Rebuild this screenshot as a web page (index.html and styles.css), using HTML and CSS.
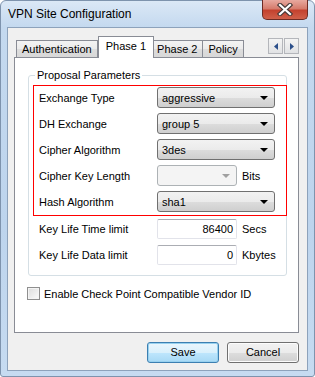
FILE: index.html
```html
<!DOCTYPE html>
<html>
<head>
    <title>VPN Site Configuration</title>
    <link rel="stylesheet" href="styles.css">
</head>
<body>
    <div class="window">
        <div class="titlebar">
            <span class="title">VPN Site Configuration</span>
            <div class="close">
                <svg width="16" height="13" viewBox="0 0 16 13">
                    <path d="M3 2 L13 11 M13 2 L3 11" stroke="#4a3a38" stroke-width="4.4" stroke-linecap="square"/>
                    <path d="M3 2 L13 11 M13 2 L3 11" stroke="#ffffff" stroke-width="2.2" stroke-linecap="square"/>
                </svg>
            </div>
        </div>
        <div class="client">
            <div class="tabstrip">
                <div class="tab">Authentication</div>
                <div class="tab selected">Phase 1</div>
                <div class="tab">Phase 2</div>
                <div class="tab">Policy</div>
                <div class="tab-scroll">
                    <span class="arrow-btn"><svg width="4" height="7" viewBox="0 0 4 7"><path d="M4 0 L0 3.5 L4 7 Z" fill="#2b4f8a"/></svg></span>
                    <span class="arrow-btn"><svg width="4" height="7" viewBox="0 0 4 7"><path d="M0 0 L4 3.5 L0 7 Z" fill="#2b4f8a"/></svg></span>
                </div>
            </div>
            <div class="panel">
                <fieldset class="group">
                    <legend>Proposal Parameters</legend>
                    <div class="highlight">
                        <div class="row">
                            <span class="label">Exchange Type</span>
                            <div class="combo"><span>aggressive</span><i class="drop"></i></div>
                        </div>
                        <div class="row">
                            <span class="label">DH Exchange</span>
                            <div class="combo"><span>group 5</span><i class="drop"></i></div>
                        </div>
                        <div class="row">
                            <span class="label">Cipher Algorithm</span>
                            <div class="combo"><span>3des</span><i class="drop"></i></div>
                        </div>
                        <div class="row">
                            <span class="label">Cipher Key Length</span>
                            <div class="combo short disabled"><span></span><i class="drop"></i></div>
                            <span class="unit">Bits</span>
                        </div>
                        <div class="row">
                            <span class="label">Hash Algorithm</span>
                            <div class="combo"><span>sha1</span><i class="drop"></i></div>
                        </div>
                    </div>
                    <div class="plain">
                        <div class="row short-row">
                            <span class="label">Key Life Time limit</span>
                            <div class="textbox">86400</div>
                            <span class="unit">Secs</span>
                        </div>
                        <div class="row short-row">
                            <span class="label">Key Life Data limit</span>
                            <div class="textbox">0</div>
                            <span class="unit">Kbytes</span>
                        </div>
                    </div>
                </fieldset>
                <div class="check">
                    <span class="box"></span>
                    <span>Enable Check Point Compatible Vendor ID</span>
                </div>
            </div>
            <div class="buttons">
                <div class="btn default">Save</div>
                <div class="btn">Cancel</div>
            </div>
        </div>
    </div>
</body>
</html>
```

FILE: styles.css
```css
body {
    margin: 0;
    font-family: "Liberation Sans", Arial, sans-serif;
    font-size: 11px;
    color: #000;
    background: #fff;
}
.window {
    width: 315px;
    height: 377px;
    box-sizing: border-box;
    border: 1px solid #7e93ad;
    border-radius: 6px 6px 3px 3px;
    padding: 0 6px 5px 6px;
    background: linear-gradient(#dbe8f6, #c4d9ef 26px, #bdd4ed 60%, #c6dbf1);
    display: flex;
    flex-direction: column;
}
.titlebar {
    height: 26px;
    display: flex;
    align-items: flex-start;
}
.title {
    font-size: 12px;
    padding: 6px 0 0 1px;
    color: #000;
}
.close {
    margin-left: auto;
    margin-top: -1px;
    width: 46px;
    height: 20px;
    box-sizing: border-box;
    border: 1px solid #6d2b24;
    border-top: none;
    border-radius: 0 0 5px 5px;
    background: linear-gradient(#e8a99f, #d67c6d 45%, #c4422f 55%, #d0604a);
    display: flex;
    align-items: center;
    justify-content: center;
}
.client {
    flex: 1;
    background: #f0f0f0;
    border: 1px solid #8da2bb;
    padding: 8px 8px 0 6px;
    display: flex;
    flex-direction: column;
}
.tabstrip {
    height: 22px;
    margin-bottom: -1px;
    padding-left: 2px;
    display: flex;
    align-items: flex-end;
}
.tab {
    height: 17px;
    margin-bottom: 1px;
    margin-left: -1px;
    padding: 0 5px;
    box-sizing: border-box;
    border: 1px solid #898c95;
    border-bottom: none;
    background: linear-gradient(#f3f3f3, #ebebeb 50%, #dddddd 51%, #d8d8d8);
    line-height: 16px;
}
.tab:first-child {
    margin-left: 0;
}
.tab.selected {
    position: relative;
    z-index: 1;
    height: 22px;
    margin: 0 -2px 0 0;
    padding: 0 7px;
    background: #fff;
    line-height: 18px;
}
.tab-scroll {
    margin-left: auto;
    margin-bottom: 4px;
    display: flex;
}
.arrow-btn {
    width: 15px;
    height: 16px;
    box-sizing: border-box;
    border: 1px solid #b4b6bb;
    background: linear-gradient(#f4f4f4, #e1e2e4);
    display: flex;
    align-items: center;
    justify-content: center;
}
.arrow-btn + .arrow-btn {
    margin-left: 1px;
}
.panel {
    flex: 1;
    background: #fff;
    border: 1px solid #898c95;
}
.group {
    margin: 11px 11px 0 13px;
    padding: 0 0 10px 0;
    border: 1px solid #d5dfe5;
    border-radius: 3px;
}
.group legend {
    margin-left: 6px;
    padding: 0 2px;
    line-height: 13px;
}
.highlight {
    margin: 3px -1px 0 4px;
    padding: 1px 11px 3px 5px;
    border: 1px solid #ff0000;
    display: flex;
    flex-direction: column;
    gap: 5px;
}
.row {
    height: 21px;
    display: flex;
    align-items: center;
}
.label {
    width: 118px;
    flex: none;
}
.combo {
    width: 118px;
    height: 21px;
    box-sizing: border-box;
    border: 1px solid #707070;
    border-radius: 3px;
    padding: 0 6px 0 4px;
    background: linear-gradient(#f2f2f2, #ebebeb 50%, #dddddd 51%, #cfcfcf);
    display: flex;
    align-items: center;
    justify-content: space-between;
}
.combo.short {
    width: 80px;
}
.combo.disabled {
    border-color: #adb2b5;
    background: #f4f4f4;
}
.drop {
    width: 0;
    height: 0;
    border-left: 4px solid transparent;
    border-right: 4px solid transparent;
    border-top: 4px solid #000;
}
.combo.disabled .drop {
    border-top-color: #a0a0a0;
}
.unit {
    margin-left: 5px;
}
.plain {
    margin-top: 3px;
    padding-left: 10px;
    display: flex;
    flex-direction: column;
    gap: 6px;
}
.short-row {
    height: 20px;
}
.textbox {
    width: 80px;
    height: 20px;
    box-sizing: border-box;
    border: 1px solid #e2e3ea;
    border-top-color: #abadb3;
    border-radius: 2px;
    padding-right: 3px;
    background: #fff;
    text-align: right;
    line-height: 18px;
}
.check {
    margin: 11px 0 0 12px;
    display: flex;
    align-items: center;
    gap: 4px;
}
.box {
    width: 13px;
    height: 13px;
    box-sizing: border-box;
    border: 1px solid #8f8f8f;
    background: linear-gradient(135deg, #dcdcdc, #fbfbfb);
    box-shadow: inset 0 0 0 1px #f4f4f4;
}
.buttons {
    margin: 9px 0 7px;
    display: flex;
    justify-content: flex-end;
    gap: 8px;
}
.btn {
    width: 72px;
    height: 21px;
    box-sizing: border-box;
    border: 1px solid #707070;
    border-radius: 3px;
    background: linear-gradient(#f2f2f2, #ebebeb 50%, #dddddd 51%, #cfcfcf);
    box-shadow: inset 0 0 0 1px #fcfcfc;
    text-align: center;
    line-height: 19px;
}
.btn.default {
    border-color: #3c7fb1;
    background: linear-gradient(#eaf6fd, #d9f0fc 50%, #bee6fd 51%, #a7d9f5);
    box-shadow: inset 0 0 0 1px #98d1ef;
}
```
